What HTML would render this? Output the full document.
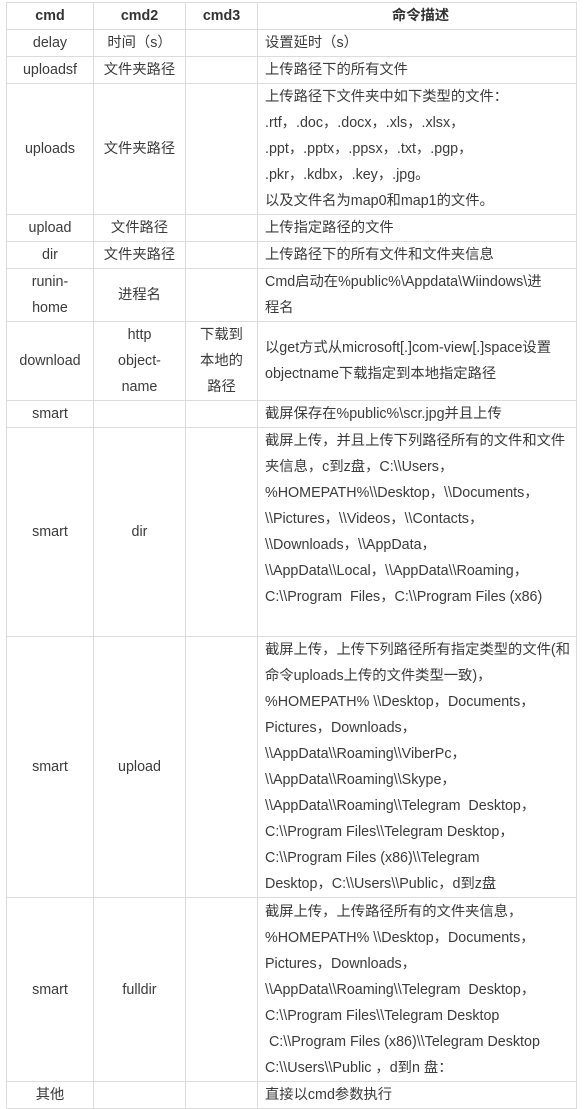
<!DOCTYPE html>
<html><head><meta charset="utf-8"><style>
html,body{margin:0;padding:0;background:#fff;width:584px;height:1109px;overflow:hidden}
table{position:absolute;left:6px;top:2px;border-collapse:collapse;table-layout:fixed;width:570px;
font-family:"Liberation Sans","Noto Sans CJK SC",sans-serif;font-size:14.3px;color:#3b3b3b}
td,th{border:1px solid #dcdcdc;padding:0;line-height:26px;text-align:center;vertical-align:middle;white-space:nowrap;overflow:hidden}
th{font-weight:bold;color:#333}
td.d,th.d{text-align:left;padding-left:7px}
th.d{text-align:center}
</style></head><body>
<table>
<colgroup><col style="width:87px"><col style="width:92px"><col style="width:72px"><col style="width:319px"></colgroup>
<tr style="height:27px"><th>cmd</th><th>cmd2</th><th>cmd3</th><th class="d">命令描述</th></tr>
<tr style="height:27px"><td>delay</td><td>时间（s）</td><td></td><td class="d">设置延时（s）</td></tr>
<tr style="height:27px"><td>uploadsf</td><td>文件夹路径</td><td></td><td class="d">上传路径下的所有文件</td></tr>
<tr style="height:131px"><td>uploads</td><td>文件夹路径</td><td></td><td class="d">上传路径下文件夹中如下类型的文件：<br>.rtf，.doc，.docx，.xls，.xlsx，<br>.ppt，.pptx，.ppsx，.txt，.pgp，<br>.pkr，.kdbx，.key，.jpg。<br>以及文件名为map0和map1的文件。</td></tr>
<tr style="height:27px"><td>upload</td><td>文件路径</td><td></td><td class="d">上传指定路径的文件</td></tr>
<tr style="height:27px"><td>dir</td><td>文件夹路径</td><td></td><td class="d">上传路径下的所有文件和文件夹信息</td></tr>
<tr style="height:53px"><td>runin-<br>home</td><td>进程名</td><td></td><td class="d">Cmd启动在%public%\Appdata\Wiindows\进<br>程名</td></tr>
<tr style="height:79px"><td>download</td><td>http<br>object-<br>name</td><td>下载到<br>本地的<br>路径</td><td class="d">以get方式从microsoft[.]com-view[.]space设置<br>objectname下载指定到本地指定路径</td></tr>
<tr style="height:27px"><td>smart</td><td></td><td></td><td class="d">截屏保存在%public%\scr.jpg并且上传</td></tr>
<tr style="height:209px"><td>smart</td><td>dir</td><td></td><td class="d">截屏上传，并且上传下列路径所有的文件和文件<br>夹信息，c到z盘，C:\\Users，<br>%HOMEPATH%\\Desktop，\\Documents，<br>\\Pictures，\\Videos，\\Contacts，<br>\\Downloads，\\AppData，<br>\\AppData\\Local，\\AppData\\Roaming，<br>C:\\Program&nbsp; Files，C:\\Program Files (x86)<br>&nbsp;</td></tr>
<tr style="height:261px"><td>smart</td><td>upload</td><td></td><td class="d">截屏上传，上传下列路径所有指定类型的文件(和<br>命令uploads上传的文件类型一致)，<br>%HOMEPATH% \\Desktop，Documents，<br>Pictures，Downloads，<br>\\AppData\\Roaming\\ViberPc，<br>\\AppData\\Roaming\\Skype，<br>\\AppData\\Roaming\\Telegram&nbsp; Desktop，<br>C:\\Program Files\\Telegram Desktop，<br>C:\\Program Files (x86)\\Telegram<br>Desktop，C:\\Users\\Public，d到z盘</td></tr>
<tr style="height:184px"><td>smart</td><td>fulldir</td><td></td><td class="d">截屏上传，上传路径所有的文件夹信息，<br>%HOMEPATH% \\Desktop，Documents，<br>Pictures，Downloads，<br>\\AppData\\Roaming\\Telegram&nbsp; Desktop，<br>C:\\Program Files\\Telegram Desktop<br>&nbsp;C:\\Program Files (x86)\\Telegram Desktop<br>C:\\Users\\Public ，d到n 盘：</td></tr>
<tr style="height:26px"><td>其他</td><td></td><td></td><td class="d">直接以cmd参数执行</td></tr>
</table>
</body></html>
